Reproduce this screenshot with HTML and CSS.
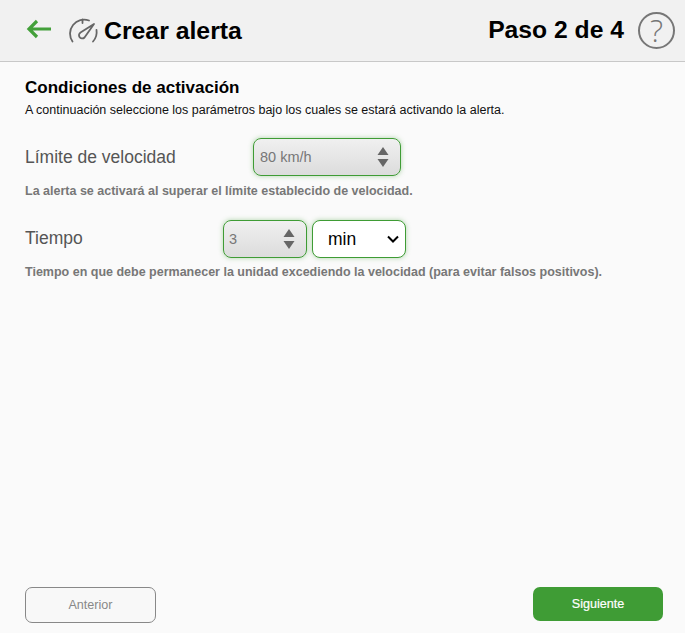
FILE: index.html
```html
<!DOCTYPE html>
<html lang="es">
<head>
<meta charset="utf-8">
<title>Crear alerta</title>
<link rel="stylesheet" href="styles.css">
</head>
<body>
<div class="page">
  <header class="header">
    <svg class="back" width="26" height="20" viewBox="0 0 26 20"><path d="M11 2 3 10l8 8M3 10h22" fill="none" stroke="#43a03a" stroke-width="3.2"/></svg>
    <svg class="gauge" width="32" height="26" viewBox="0 0 32 26"><g fill="none" stroke="#666" stroke-width="1.8" stroke-linecap="round"><path d="M5.500 23.500A14 14 0 0 1 22 2.500"/><path d="M29.500 12A14 14 0 0 1 26 23.500"/><path d="M15.500 1.500v3.500"/><path d="M27 6 17.500 19.500C16 21 13.500 20.500 12.500 19 11.500 17.500 12 15.500 13.500 14.500Z" stroke-linejoin="round"/></g></svg>
    <h1 class="title">Crear alerta</h1>
    <div class="step">Paso 2 de 4</div>
    <div class="help">?</div>
  </header>
  <main class="content">
    <h2 class="section-title">Condiciones de activación</h2>
    <p class="section-sub">A continuación seleccione los parámetros bajo los cuales se estará activando la alerta.</p>
    <div class="row row-speed">
      <span class="label label-speed">Límite de velocidad</span>
      <div class="field field-speed">
        <span>80 km/h</span>
        <svg class="spin" width="12" height="20" viewBox="0 0 12 20"><path d="M6 0l5.500 8H.5zM.5 12h11L6 20z" fill="#666"/></svg>
      </div>
    </div>
    <p class="hint hint-speed">La alerta se activará al superar el límite establecido de velocidad.</p>
    <div class="row row-time">
      <span class="label label-time">Tiempo</span>
      <div class="field field-time">
        <span>3</span>
        <svg class="spin" width="12" height="20" viewBox="0 0 12 20"><path d="M6 0l5.500 8H.5zM.5 12h11L6 20z" fill="#666"/></svg>
      </div>
      <select class="unit"><option>min</option><option>h</option></select>
    </div>
    <p class="hint">Tiempo en que debe permanecer la unidad excediendo la velocidad (para evitar falsos positivos).</p>
  </main>
  <footer class="footer">
    <button class="btn btn-prev">Anterior</button>
    <button class="btn btn-next">Siguiente</button>
  </footer>
</div>
</body>
</html>
```
FILE: styles.css
```css
html, body { margin: 0; padding: 0; height: 100%; }
body { background: #fafafa; font-family: "Liberation Sans", Arial, sans-serif; color: #000; overflow: hidden; }
.page { height: 633px; display: flex; flex-direction: column; }
.header { height: 61px; background: #f1f1f1; border-bottom: 1px solid #c8c8c8; display: flex; align-items: center; padding: 0 10px 0 26px; flex: none; }
.back { margin-right: 15px; margin-top: -3px; }
.gauge { margin-right: 5px; margin-top: 1px; }
.title { font-size: 24.8px; font-weight: 700; margin: 0; flex: 1; }
.step { font-size: 24.7px; font-weight: 700; margin-right: 14px; margin-top: -1px; }
.help { width: 33px; height: 33px; border: 2px solid #777; border-radius: 50%; color: #777; font-family: "Open Sans", sans-serif; font-size: 31px; font-weight: 300; line-height: 33px; text-align: center; }
.content { flex: 1; padding: 16px 25px 0; }
.section-title { font-size: 17px; font-weight: 700; margin: 0; line-height: 20px; }
.section-sub { font-size: 12.5px; margin: 4px 0 0; line-height: 16px; color: #111; }
.row { display: flex; align-items: center; }
.row-speed { margin-top: 20px; }
.row-time { margin-top: 21px; }
.label { font-size: 17.5px; color: #555; }
.label-speed { width: 228px; }
.label-time { width: 198px; padding-bottom: 2px; }
.field, .unit { height: 38px; box-sizing: border-box; border: 1px solid #3f9c35; border-radius: 8px; box-shadow: 0 0 5px rgba(63,156,53,.4); }
.field { display: flex; align-items: center; justify-content: space-between; background: linear-gradient(#f0f0f0, #dcdcdc); color: #777; font-size: 14.5px; }
.field-speed { width: 148px; padding: 0 11px 0 6px; }
.field-time { width: 84px; padding: 0 11px 0 5px; }
.unit { width: 94px; margin-left: 5px; appearance: none; background: #fff url("data:image/svg+xml,%3Csvg xmlns='http://www.w3.org/2000/svg' width='14' height='8' viewBox='0 0 14 8'%3E%3Cpath d='M2 1.500 7 6.500l5-5' fill='none' stroke='%23000' stroke-width='2'/%3E%3C/svg%3E") no-repeat right 5px center; font-family: inherit; font-size: 17.5px; color: #000; padding: 0 0 0 15px; outline: none; }
.hint { font-size: 12.5px; font-weight: 700; color: #777; margin: 0; line-height: 16px; }
.hint-speed { margin-top: 7px; }
.row-time + .hint { margin-top: 6px; }
.footer { display: flex; justify-content: space-between; padding: 0 22px 10px 25px; flex: none; }
.btn { width: 131px; height: 36px; border-radius: 7px; font-family: inherit; font-size: 12.6px; box-sizing: border-box; padding: 0; }
.btn-prev { background: #f8f8f8; border: 1px solid #888; color: #888; }
.btn-next { width: 130px; height: 34px; background: #3f9c35; border: 0; color: #fff; font-weight: 400; margin-bottom: 2px; -webkit-text-stroke: .2px #fff; }
```
